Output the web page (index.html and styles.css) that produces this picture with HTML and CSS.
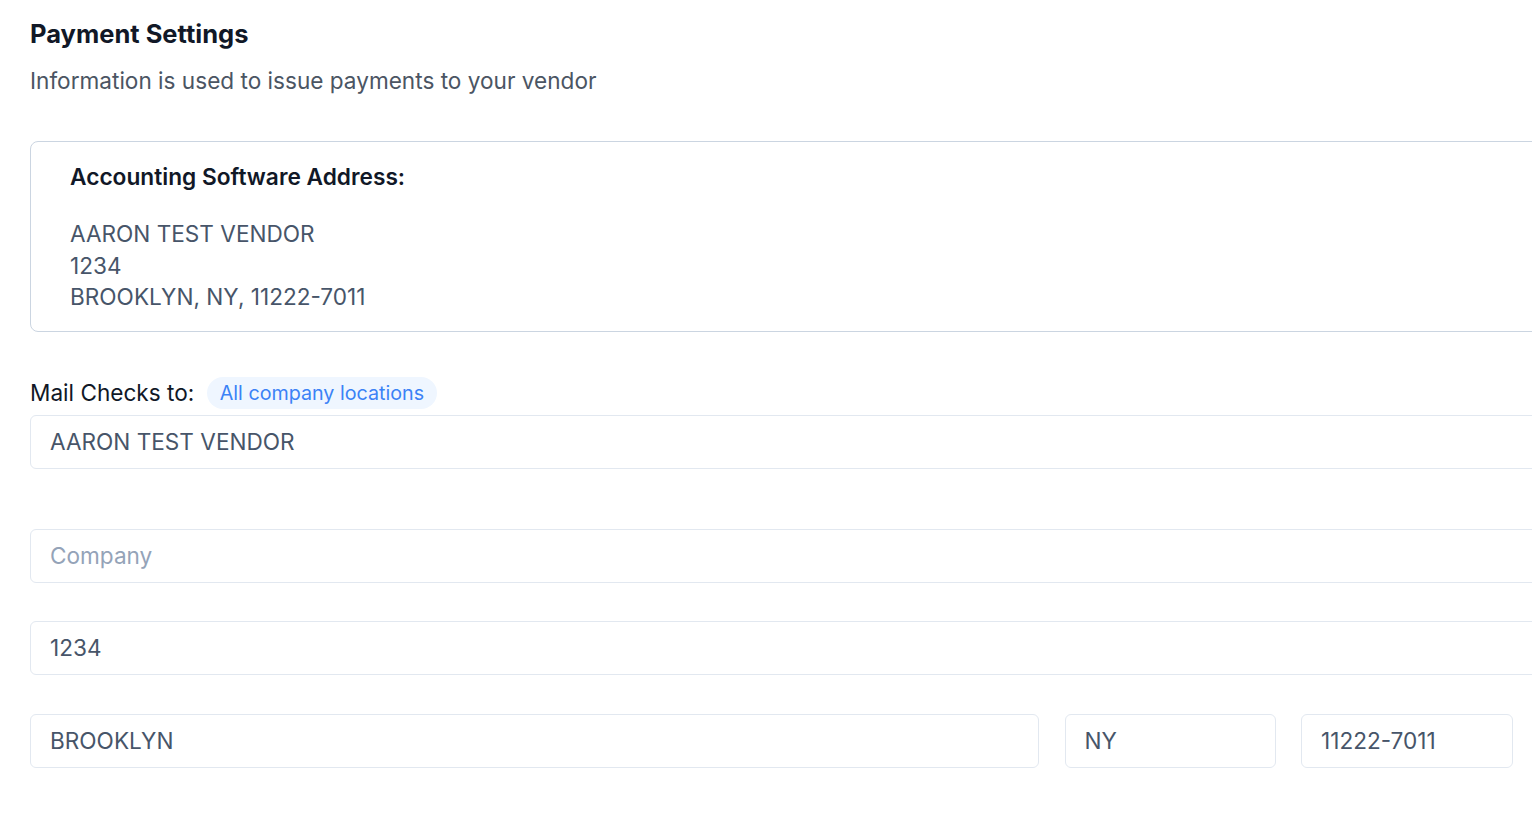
FILE: index.html
```html
<!DOCTYPE html>
<html lang="en">
<head>
<meta charset="utf-8">
<title>Payment Settings</title>
<link rel="stylesheet" href="styles.css">
</head>
<body>
<main class="page">
  <h1 class="title">Payment Settings</h1>
  <p class="subtitle">Information is used to issue payments to your vendor</p>

  <section class="card">
    <h2 class="card-title">Accounting Software Address:</h2>
    <div class="address">
      <div>AARON TEST VENDOR</div>
      <div>1234</div>
      <div>BROOKLYN, NY, 11222-7011</div>
    </div>
  </section>

  <div class="mail-label">
    <span class="label-text">Mail Checks to:</span>
    <span class="badge">All company locations</span>
  </div>

  <div class="field field-name"><input class="input" type="text" value="AARON TEST VENDOR"></div>
  <div class="field field-company"><input class="input" type="text" placeholder="Company"></div>
  <div class="field field-street"><input class="input" type="text" value="1234"></div>
  <div class="row">
    <input class="input" type="text" value="BROOKLYN">
    <input class="input" type="text" value="NY">
    <input class="input" type="text" value="11222-7011">
  </div>
</main>
</body>
</html>
```
FILE: styles.css
```css
html, body {
  margin: 0;
  padding: 0;
  background: #ffffff;
  overflow: hidden;
}

body {
  font-family: Inter, "Liberation Sans", sans-serif;
  color: #475569;
}

.page {
  width: 1560px;
  padding: 20px 0 0 30px;
  box-sizing: border-box;
}

.title {
  margin: 0;
  font-size: 25.5px;
  line-height: 28px;
  font-weight: 700;
  color: #111827;
}

.subtitle {
  margin: 19px 0 0;
  font-size: 22.6px;
  line-height: 28px;
  color: #4b5563;
}

.card {
  margin-top: 46px;
  border: 1px solid #cbd5e1;
  border-radius: 8px;
  padding: 21px 39px 18px;
}

.card-title {
  margin: 0;
  font-size: 22.7px;
  line-height: 28px;
  font-weight: 600;
  color: #111827;
}

.address {
  margin-top: 27px;
  font-size: 22.6px;
  line-height: 31.5px;
  color: #475569;
}

.mail-label {
  margin-top: 45px;
  display: flex;
  align-items: center;
  gap: 13px;
  height: 32px;
}

.label-text {
  font-size: 22.6px;
  color: #111827;
}

.badge {
  display: inline-flex;
  align-items: center;
  height: 32px;
  padding: 0 12.5px;
  border-radius: 16px;
  background: #eff6ff;
  color: #3b82f6;
  font-size: 19.7px;
}

.field {
  display: block;
}

.field-name { margin-top: 6px; }
.field-company { margin-top: 60px; }
.field-street { margin-top: 38px; }

.input {
  display: block;
  width: 100%;
  box-sizing: border-box;
  height: 54px;
  margin: 0;
  padding: 0 19px;
  border: 1px solid #e2e8f0;
  border-radius: 6px;
  background: #ffffff;
  font-family: Inter, "Liberation Sans", sans-serif;
  font-size: 22.6px;
  color: #475569;
  outline: none;
}

.input::placeholder {
  color: #94a3b8;
}

.row {
  margin-top: 39px;
  width: 1483px;
  display: grid;
  grid-template-columns: 1009px 211px 212px;
  column-gap: 25.5px;
}
```
